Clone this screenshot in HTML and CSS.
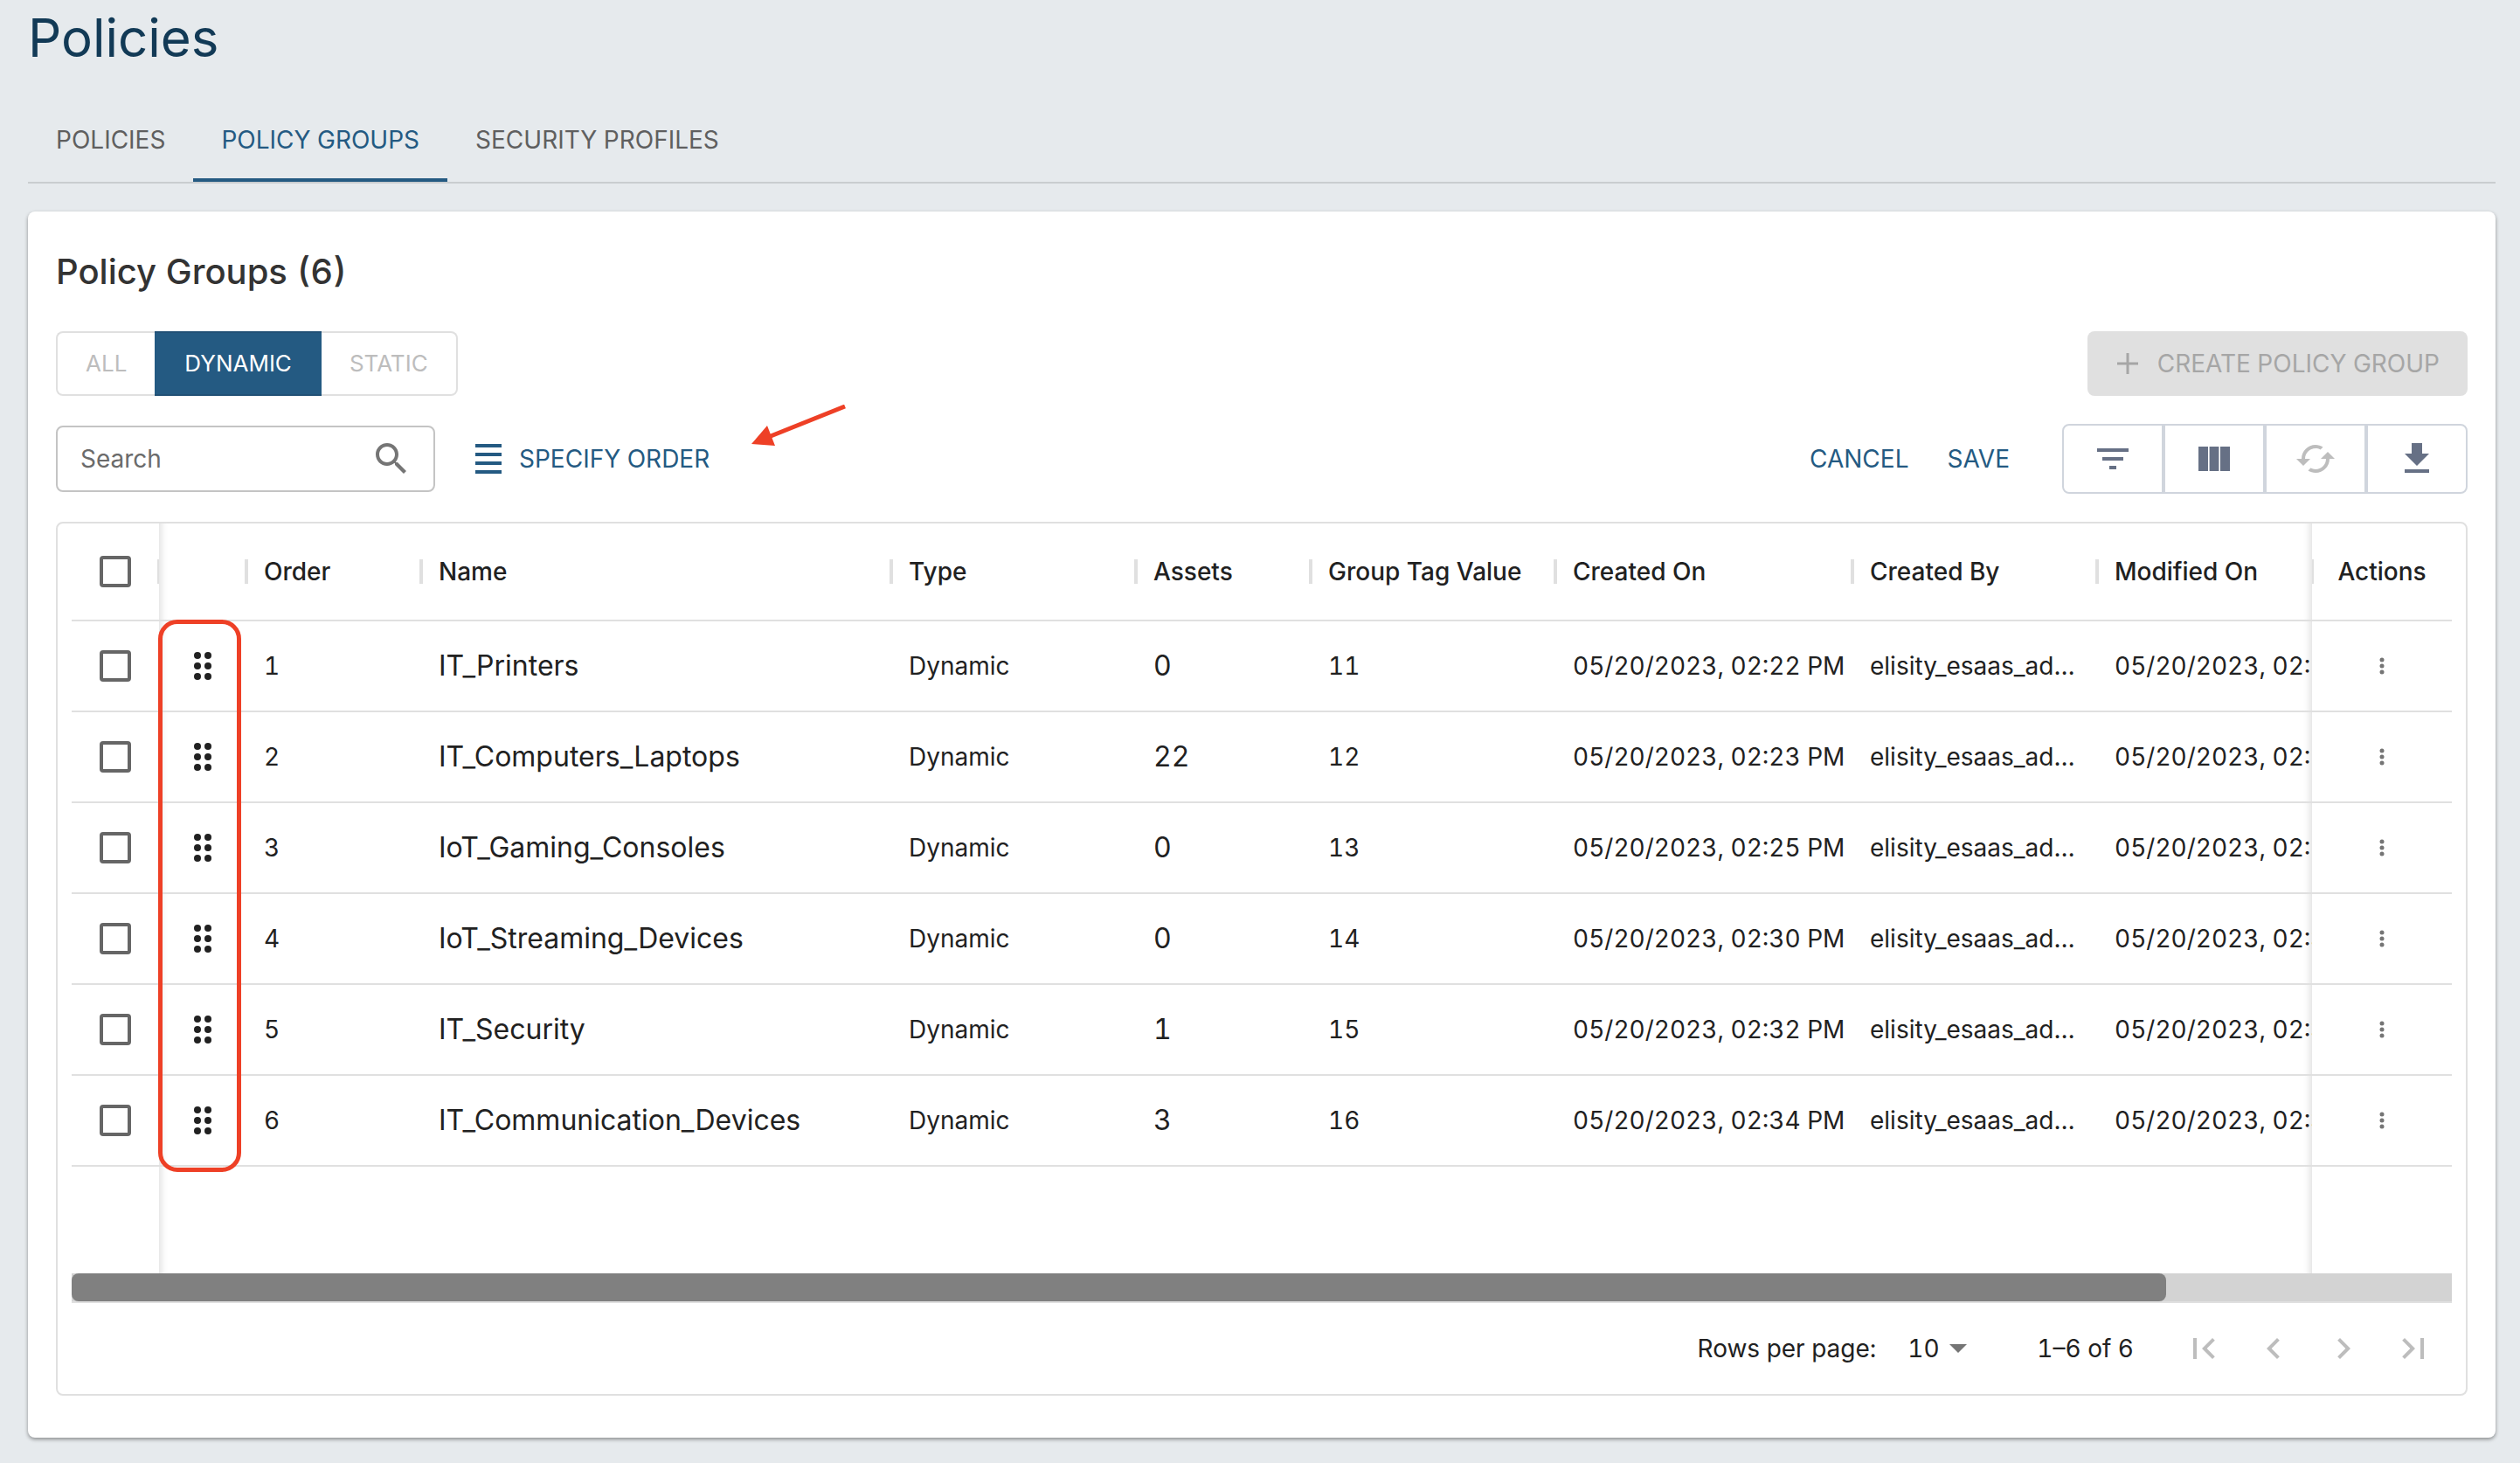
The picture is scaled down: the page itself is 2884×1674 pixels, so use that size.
FILE: index.html
```html
<!DOCTYPE html>
<html lang="en">
  <head>
    <meta charset="UTF-8" />
    <meta name="viewport" content="width=device-width, initial-scale=1" />
    <title>Policies</title>
    <link rel="stylesheet" href="styles.css" />
  </head>

  <body>
    <h1>Policies</h1>
    <nav class="tabs">
      <a href="#policies">POLICIES</a>
      <a href="#groups" class="active" aria-current="page">POLICY GROUPS</a>
      <a href="#profiles">SECURITY PROFILES</a>
    </nav>

    <main class="card">
      <h2>Policy Groups (6)</h2>

      <div class="bar">
        <div class="toggle">
          <button type="button" disabled>ALL</button>
          <button type="button" class="selected">DYNAMIC</button>
          <button type="button" disabled>STATIC</button>
        </div>
        <button type="button" class="create" disabled>
          <svg width="28" height="28" viewBox="0 0 28 28"><path d="M2 14h24M14 2v24" fill="none" stroke="currentColor" stroke-width="3" /></svg>
          CREATE POLICY GROUP
        </button>
      </div>

      <div class="bar tools">
        <div class="search">
          <input type="search" placeholder="Search" aria-label="Search" />
          <svg width="48" height="48" viewBox="0 0 24 24" fill="currentColor"><path d="M15.5 14h-.79l-.28-.27C15.41 12.59 16 11.11 16 9.5 16 5.91 13.09 3 9.5 3S3 5.91 3 9.5 5.91 16 9.5 16c1.61 0 3.09-.59 4.23-1.57l.27.28v.79l5 4.99L20.49 19l-4.99-5zm-6 0C7.01 14 5 11.99 5 9.5S7.01 5 9.5 5 14 7.01 14 9.5 11.99 14 9.5 14z" /></svg>
        </div>
        <button type="button" class="text-button order-button">
          <svg width="30" height="34" viewBox="0 0 30 34"><path d="M0 2h30M0 12h30M0 22h30M0 32h30" fill="none" stroke="currentColor" stroke-width="4" /></svg>
          SPECIFY ORDER
          <svg class="arrow" width="110" height="48" viewBox="0 0 110 48"><path d="M107 2L22 36" fill="none" stroke="#ee4026" stroke-width="5" /><path d="M0 45L18 24L27 47Z" fill="#ee4026" /></svg>
        </button>
        <div class="actions">
          <button type="button" class="text-button">CANCEL</button>
          <button type="button" class="text-button">SAVE</button>
          <div class="icon-group">
            <button type="button" aria-label="Filter">
              <svg width="48" height="48" viewBox="0 0 24 24" fill="currentColor"><path d="M10 18h4v-2h-4v2zM3 6v2h18V6H3zm3 7h12v-2H6v2z" /></svg>
            </button>
            <button type="button" aria-label="Columns">
              <svg width="48" height="48" viewBox="0 0 24 24" fill="currentColor"><path d="M3 5h5.500v14H3zM9.300 5h5.400v14H9.300zM15.500 5H21v14h-5.500z" /></svg>
            </button>
            <button type="button" aria-label="Refresh" disabled>
              <svg width="48" height="48" viewBox="0 0 24 24" fill="currentColor"><path d="M19 8l-4 4h3c0 3.310-2.690 6-6 6-1.010 0-1.970-.25-2.800-.7l-1.460 1.460C8.970 19.540 10.430 20 12 20c4.420 0 8-3.580 8-8h3l-4-4zM6 12c0-3.310 2.690-6 6-6 1.010 0 1.970.25 2.800.7l1.460-1.460C15.030 4.460 13.570 4 12 4c-4.420 0-8 3.580-8 8H1l4 4 4-4H6z" /></svg>
            </button>
            <button type="button" aria-label="Download">
              <svg width="48" height="48" viewBox="0 0 24 24" fill="currentColor"><path d="M19 9h-4V3H9v6H5l7 7 7-7zM5 18v2h14v-2H5z" /></svg>
            </button>
          </div>
        </div>
      </div>

      <section class="grid">
        <div class="grid-body">
          <table>
            <colgroup>
              <col class="w-check" /><col class="w-drag" /><col class="w-order" /><col /><col class="w-type" /><col class="w-assets" /><col class="w-tag" /><col class="w-created" /><col class="w-by" /><col class="w-modified" /><col class="w-actions" />
            </colgroup>
            <thead>
              <tr>
                <th class="check"><input type="checkbox" aria-label="Select all" /></th>
                <th class="drag"></th>
                <th>Order</th>
                <th>Name</th>
                <th>Type</th>
                <th>Assets</th>
                <th>Group Tag Value</th>
                <th>Created On</th>
                <th>Created By</th>
                <th class="modified">Modified On</th>
                <th class="menu">Actions</th>
              </tr>
            </thead>
            <tbody></tbody>
          </table>
          <div class="drag-outline"></div>
        </div>

        <div class="scrollbar"><div class="thumb"></div></div>

        <footer>
          <label for="rows">Rows per page:</label>
          <div class="rows-select">
            <select id="rows">
              <option>10</option>
              <option>25</option>
              <option>50</option>
            </select>
            <svg width="20" height="10" viewBox="0 0 20 10"><path d="M0 0h20L10 10z" fill="currentColor" /></svg>
          </div>
          <span class="range">1–6 of 6</span>
          <div class="pager">
            <button type="button" aria-label="First page" disabled>
              <svg width="48" height="48" viewBox="0 0 24 24" fill="currentColor"><path d="M18.410 16.590L13.820 12l4.590-4.590L17 6l-6 6 6 6zM6 6h2v12H6z" /></svg>
            </button>
            <button type="button" aria-label="Previous page" disabled>
              <svg width="48" height="48" viewBox="0 0 24 24" fill="currentColor"><path d="M15.410 7.410L14 6l-6 6 6 6 1.410-1.410L10.830 12z" /></svg>
            </button>
            <button type="button" aria-label="Next page" disabled>
              <svg width="48" height="48" viewBox="0 0 24 24" fill="currentColor"><path d="M10 6L8.590 7.410 13.170 12l-4.580 4.590L10 18l6-6z" /></svg>
            </button>
            <button type="button" aria-label="Last page" disabled>
              <svg width="48" height="48" viewBox="0 0 24 24" fill="currentColor"><path d="M5.590 7.410L10.180 12l-4.590 4.590L7 18l6-6-6-6zM16 6h2v12h-2z" /></svg>
            </button>
          </div>
        </footer>
      </section>
    </main>

    <template>
      <tr>
        <td class="check"><input type="checkbox" /></td>
        <td class="drag">
          <svg width="20" height="32" viewBox="0 0 20 32" fill="currentColor"><circle cx="4" cy="4" r="4" /><circle cx="16" cy="4" r="4" /><circle cx="4" cy="16" r="4" /><circle cx="16" cy="16" r="4" /><circle cx="4" cy="28" r="4" /><circle cx="16" cy="28" r="4" /></svg>
        </td>
        <td class="order"></td>
        <td class="name"></td>
        <td>Dynamic</td>
        <td class="assets"></td>
        <td class="tag"></td>
        <td class="created"></td>
        <td>elisity_esaas_admin</td>
        <td class="modified"></td>
        <td class="menu">
          <button type="button" aria-label="Row actions">
            <svg width="6" height="20" viewBox="0 0 6 20" fill="currentColor"><circle cx="3" cy="3" r="2.500" /><circle cx="3" cy="10" r="2.500" /><circle cx="3" cy="17" r="2.500" /></svg>
          </button>
        </td>
      </tr>
    </template>

    <script>
      const groups = [
        { name: "IT_Printers", assets: 0, tag: 11, time: "02:22" },
        { name: "IT_Computers_Laptops", assets: 22, tag: 12, time: "02:23" },
        { name: "IoT_Gaming_Consoles", assets: 0, tag: 13, time: "02:25" },
        { name: "IoT_Streaming_Devices", assets: 0, tag: 14, time: "02:30" },
        { name: "IT_Security", assets: 1, tag: 15, time: "02:32" },
        { name: "IT_Communication_Devices", assets: 3, tag: 16, time: "02:34" },
      ];

      const tbody = document.querySelector("tbody");
      const template = document.querySelector("template").content;

      groups.forEach((group, i) => {
        const row = template.cloneNode(true);
        const date = "05/20/2023, " + group.time + " PM";
        row.querySelector("input").setAttribute("aria-label", "Select " + group.name);
        row.querySelector(".order").textContent = i + 1;
        row.querySelector(".name").textContent = group.name;
        row.querySelector(".assets").textContent = group.assets;
        row.querySelector(".tag").textContent = group.tag;
        row.querySelector(".created").textContent = date;
        row.querySelector(".modified").textContent = date;
        tbody.appendChild(row);
      });

      // empty space under the last row
      const filler = document.createElement("tr");
      filler.className = "filler";
      filler.innerHTML =
        '<td></td><td class="drag"></td><td colspan="7"></td><td class="modified"></td><td></td>';
      tbody.appendChild(filler);
    </script>
  </body>
</html>
```
FILE: styles.css
```css
* {
  box-sizing: border-box;
}

body {
  margin: 0;
  padding: 0 28px 28px 32px;
  background-color: #e6eaed;
  color: #212121;
  font-family: Inter, "Liberation Sans", sans-serif;
  font-size: 28px;
  font-variant-numeric: tabular-nums;
  line-height: 40px;
}

button,
input,
select {
  font: inherit;
  font-variant-numeric: inherit;
  color: inherit;
}

button {
  display: flex;
  align-items: center;
  justify-content: center;
  padding: 0;
  border: none;
  background: none;
}

svg {
  display: block;
  flex: none;
}

h1 {
  margin: 0;
  color: #123a56;
  font-size: 60px;
  font-weight: 400;
  line-height: 86px;
}

.tabs {
  display: flex;
  margin-top: 26px;
  border-bottom: 2px solid #c9cdcf;
}

.tabs a {
  height: 96px;
  padding: 0 32px;
  border-bottom: 4px solid transparent;
  color: #5f5f5f;
  line-height: 96px;
  text-decoration: none;
}

.tabs .active {
  border-color: #245a82;
  color: #245a82;
}

.card {
  margin-top: 32px;
  padding: 32px 32px 48px;
  border-radius: 8px;
  background-color: white;
  box-shadow: 0 2px 4px rgba(0, 0, 0, 0.4);
}

h2 {
  margin: 0;
  color: #333;
  font-size: 40px;
  font-weight: 500;
  line-height: 73px;
}

.bar {
  display: flex;
  align-items: center;
  justify-content: space-between;
  margin-top: 32px;
}

.toggle {
  display: flex;
}

.toggle button {
  height: 74px;
  padding: 0 32px;
  border: 2px solid #e0e0e0;
  color: #bdbdbd;
  font-size: 26px;
}

.toggle button:first-child {
  border-right: none;
  border-radius: 8px 0 0 8px;
}

.toggle button:last-child {
  border-left: none;
  border-radius: 0 8px 8px 0;
}

.toggle .selected {
  border-color: #215075;
  border-width: 2px 0;
  padding: 0 34px;
  background-color: #245a82;
  color: white;
}

.create {
  gap: 20px;
  height: 74px;
  padding: 0 32px;
  border-radius: 8px;
  background-color: #e0e0e0;
  color: #a6a6a6;
}

.tools {
  gap: 46px;
}

.search {
  display: flex;
  align-items: center;
  width: 434px;
  height: 76px;
  padding: 0 24px 0 26px;
  border: 2px solid #c4c4c4;
  border-radius: 8px;
  color: #757575;
}

.search input {
  flex: 1;
  min-width: 0;
  padding: 0;
  border: none;
  outline: none;
  color: #212121;
}

.search input::placeholder {
  color: #6b6b6b;
  opacity: 1;
}

.text-button {
  color: #245a82;
}

.order-button {
  position: relative;
  gap: 20px;
}

.arrow {
  position: absolute;
  left: calc(100% + 48px);
  bottom: 34px;
}

.actions {
  display: flex;
  gap: 44px;
  margin-left: auto;
}

.icon-group {
  display: flex;
  margin-left: 16px;
  border: 2px solid #d0d5dd;
  border-radius: 8px;
}

.icon-group button {
  width: 116px;
  height: 76px;
  border-left: 4px solid #d0d5dd;
  color: #667085;
}

.icon-group button:first-child {
  width: 112px;
  border: none;
}

.icon-group button:disabled {
  color: #bdbdbd;
}

.grid {
  margin-top: 32px;
  padding: 0 16px;
  border: 2px solid #e0e0e0;
  border-radius: 8px;
}

.grid-body {
  position: relative;
}

table {
  width: 100%;
  table-layout: fixed;
  border-collapse: separate;
  border-spacing: 0;
}

.w-check,
.w-drag {
  width: 100px;
}

.w-order,
.w-assets {
  width: 200px;
}

.w-type,
.w-tag,
.w-by {
  width: 280px;
}

.w-created {
  width: 340px;
}

.w-modified {
  width: 246px;
}

.w-actions {
  width: 160px;
}

th,
td {
  height: 104px;
  padding: 0 0 0 20px;
  border-bottom: 2px solid #e0e0e0;
  overflow: hidden;
  text-align: left;
  text-overflow: ellipsis;
  white-space: nowrap;
}

td:nth-child(9) {
  padding-right: 20px;
}

/* each column separator is shared by the two headers beside it */
th {
  height: 112px;
  background-image: linear-gradient(#e0e0e0, #e0e0e0), linear-gradient(#e0e0e0, #e0e0e0);
  background-position: left center, right center;
  background-repeat: no-repeat;
  background-size: 2px 28px;
  font-weight: 500;
}

th.check,
th.drag {
  background-size: 0 0, 2px 28px;
}

th.modified,
th.menu {
  background-size: 2px 28px, 0 0;
}

.name,
.assets {
  font-size: 32px;
}

.check,
.drag,
.menu {
  padding: 0;
  text-align: center;
}

.check input {
  appearance: none;
  display: block;
  width: 36px;
  height: 36px;
  margin: 0 auto;
  border: 4px solid #666;
  border-radius: 4px;
}

.drag svg,
.menu button {
  margin: 0 auto;
}

/* shadows of the pinned first and last columns */
.drag {
  box-shadow: inset 10px 0 8px -8px rgba(0, 0, 0, 0.14);
}

.modified {
  box-shadow: inset -10px 0 8px -8px rgba(0, 0, 0, 0.14);
  text-overflow: clip;
}

.menu button {
  color: #757575;
}

.filler td {
  height: 122px;
  border: none;
}

.drag-outline {
  position: absolute;
  top: 110px;
  bottom: 116px;
  left: 99px;
  width: 95px;
  border: 5px solid #ee4026;
  border-radius: 22px;
  pointer-events: none;
}

.scrollbar {
  border-bottom: 2px solid #e0e0e0;
  background-color: #d3d3d3;
}

.thumb {
  width: 88%;
  height: 32px;
  border-radius: 8px;
  background-color: #808080;
}

footer {
  display: flex;
  align-items: center;
  justify-content: flex-end;
  height: 104px;
  padding-right: 4px;
}

.rows-select {
  display: flex;
  align-items: center;
  margin: 0 80px 0 36px;
  color: #757575;
}

.rows-select select {
  appearance: none;
  width: 48px;
  padding: 0;
  border: none;
  background: none;
  color: #212121;
}

.pager {
  display: flex;
  margin-left: 40px;
}

.pager button {
  width: 80px;
  height: 80px;
  color: #bdbdbd;
}
```
